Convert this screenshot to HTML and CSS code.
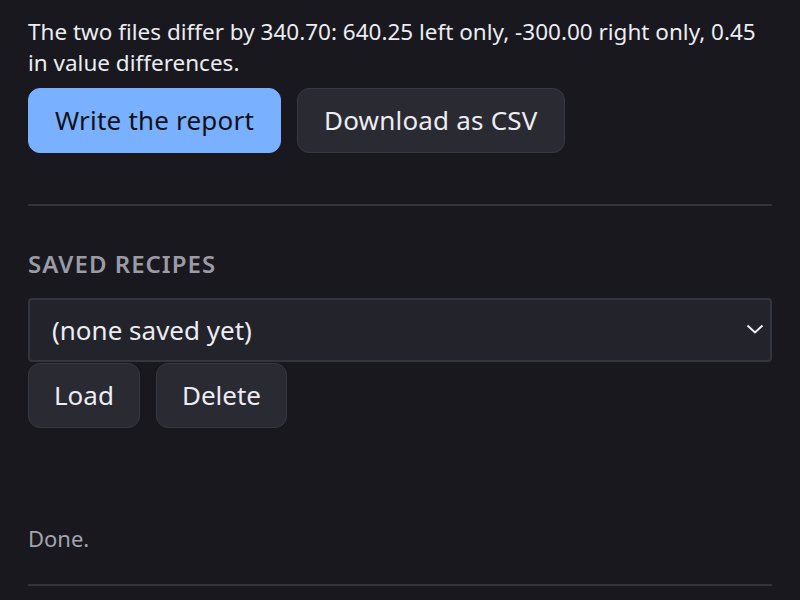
FILE: index.html
```html
<!DOCTYPE html>
<html lang="en">
<head>
    <meta charset="UTF-8">
    <meta name="viewport" content="width=device-width, initial-scale=1.0">
    <title>Compare</title>
    <link rel="stylesheet" href="styles.css">
</head>
<body>
    <div class="panel">
        <p class="summary">The two files differ by 340.70: 640.25 left only, -300.00 right only, 0.45 in value differences.</p>
        <div class="actions">
            <button class="btn primary">Write the report</button>
            <button class="btn">Download as CSV</button>
        </div>

        <hr class="rule">

        <h3 class="section-title">Saved recipes</h3>
        <div class="select-wrap">
            <select class="recipe-select">
                <option>(none saved yet)</option>
            </select>
            <svg class="chevron" width="18" height="10" viewBox="0 0 18 10">
                <polyline points="1.5,1.5 9,8.5 16.5,1.5" fill="none" stroke="#eeeef2" stroke-width="2"/>
            </svg>
        </div>
        <div class="actions tight">
            <button class="btn small">Load</button>
            <button class="btn small">Delete</button>
        </div>

        <p class="status">Done.</p>
        <hr class="rule bottom">
    </div>
</body>
</html>
```

FILE: styles.css
```css
body {
    margin: 0;
    background-color: #18181e;
    color: #ececf1;
    font-family: "Noto Sans", "Open Sans", sans-serif;
    font-size: 22.5px;
    line-height: 31px;
}
.panel {
    padding: 16px 28px 0;
}
.summary {
    margin: 0 0 10px;
}
.actions {
    display: flex;
    gap: 16px;
}
.btn {
    font-family: inherit;
    font-size: 26px;
    line-height: 37px;
    letter-spacing: 0.2px;
    padding: 13px 26px;
    border-radius: 12px;
    border: 1px solid #383842;
    background-color: #2a2a32;
    color: #ececf1;
}
.btn.small {
    letter-spacing: 0;
    padding: 13px 25px;
}
.btn.primary {
    background-color: #79b0ff;
    border-color: #79b0ff;
    color: #111118;
}
.rule {
    border: 0;
    border-top: 2px solid #33333a;
    margin: 51px 0 0;
}
.section-title {
    margin: 42px 0 19px;
    font-size: 24px;
    font-weight: 600;
    letter-spacing: 1px;
    text-transform: uppercase;
    color: #9b9ba5;
}
.select-wrap {
    position: relative;
}
.recipe-select {
    appearance: none;
    width: 100%;
    height: 64px;
    padding: 0 22px;
    font-family: inherit;
    font-size: 26px;
    color: #ececf1;
    background-color: #23232b;
    border: 2px solid #35353d;
    border-radius: 4px;
}
.chevron {
    position: absolute;
    right: 8px;
    top: 26px;
}
.actions.tight {
    margin-top: 1px;
}
.status {
    margin: 95px 0 0;
    font-size: 22px;
    color: #a3a3ad;
}
.rule.bottom {
    margin-top: 30px;
}
```
